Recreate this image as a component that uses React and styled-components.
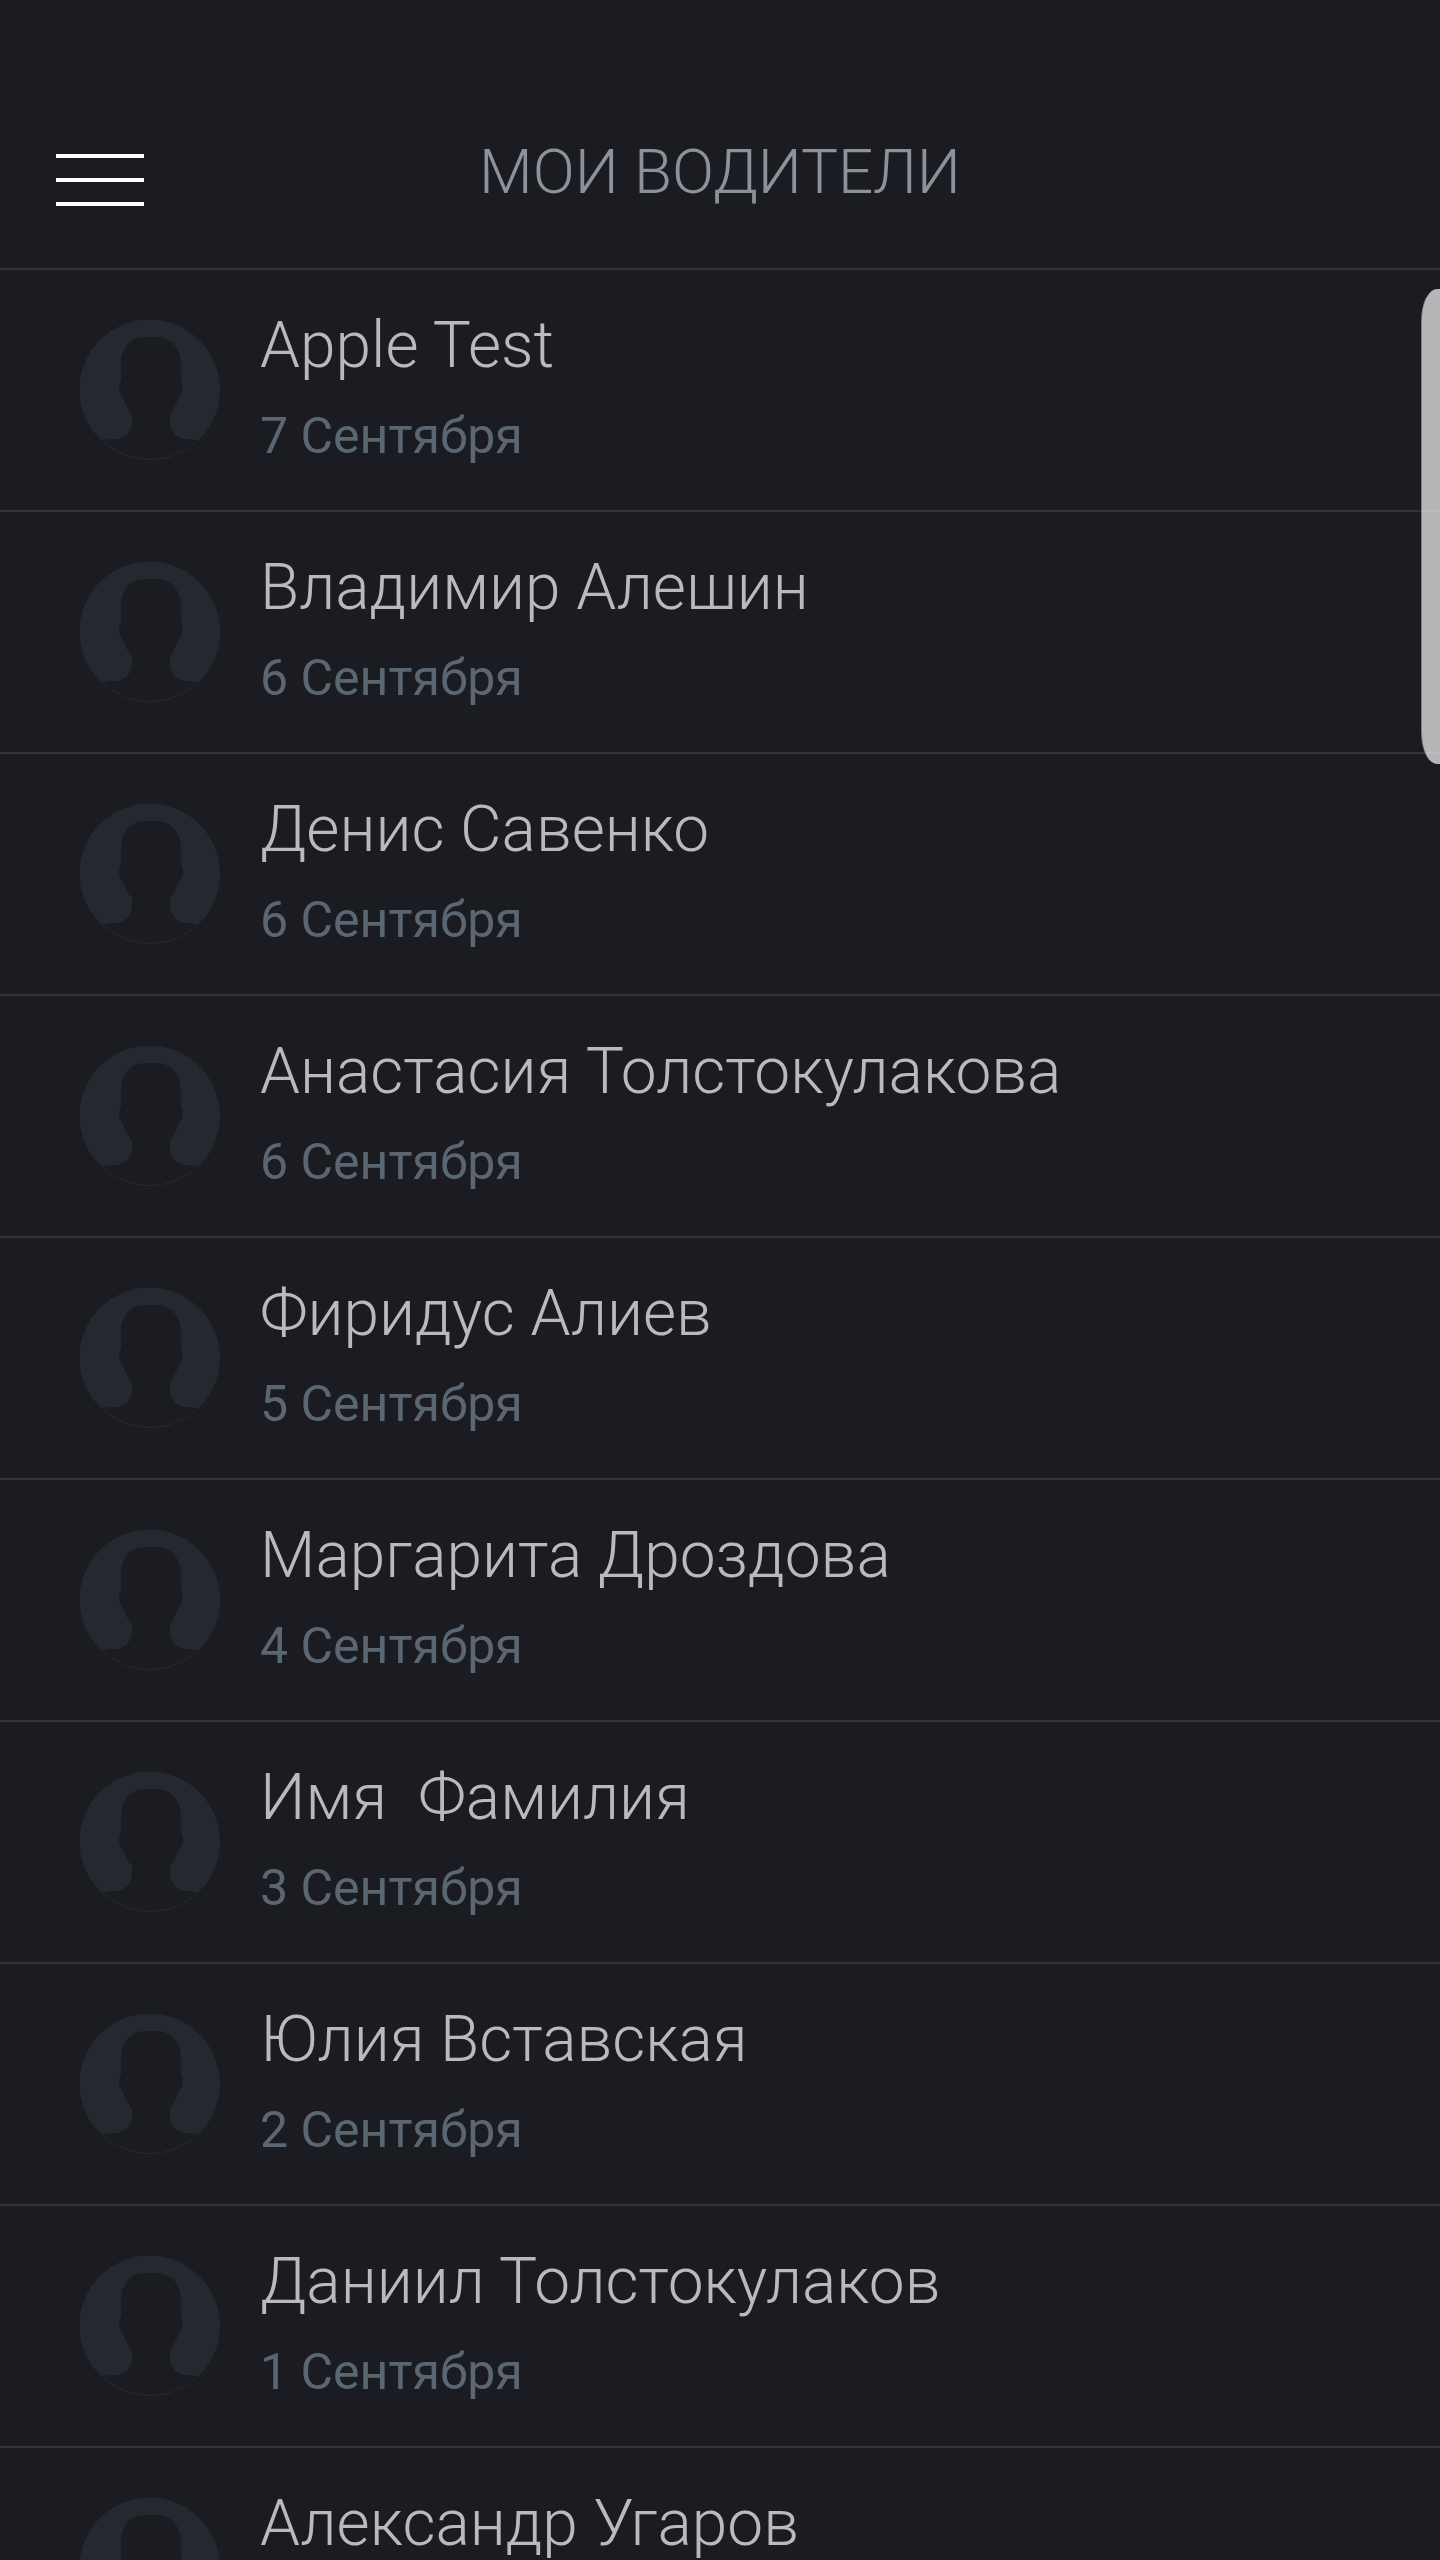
import React from "react";
import styled, { createGlobalStyle } from "styled-components";

const drivers = [
  { name: "Apple Test", date: "7 Сентября" },
  { name: "Владимир Алешин", date: "6 Сентября" },
  { name: "Денис Савенко", date: "6 Сентября" },
  { name: "Анастасия Толстокулакова", date: "6 Сентября" },
  { name: "Фиридус Алиев", date: "5 Сентября" },
  { name: "Маргарита Дроздова", date: "4 Сентября" },
  { name: "Имя  Фамилия", date: "3 Сентября" },
  { name: "Юлия Вставская", date: "2 Сентября" },
  { name: "Даниил Толстокулаков", date: "1 Сентября" },
  { name: "Александр Угаров" },
];

const Avatar = () => (
  <AvatarIcon viewBox="0 0 140 140" aria-hidden="true">
    <circle cx="70" cy="70" r="69.5" fill="none" stroke="#27292c" />
    <path
      fill="#25292f"
      d="M21 120A70 70 0 1 1 118 120L107 119C97 119 90 111 90 102V94C94 89 97 83 98 78C104 73 104 65 101 60V44C101 27 90 17 76 17H65C51 17 41 28 41 44V60C38 65 38 73 43 78C45 84 48 90 52 94V102C52 111 45 119 35 119Z"
    />
  </AvatarIcon>
);

const App = () => {
  return (
    <Page>
      <GlobalStyle />
      <Header>
        <MenuButton type="button" aria-label="Меню">
          <span />
          <span />
          <span />
        </MenuButton>
        <Title>МОИ ВОДИТЕЛИ</Title>
      </Header>
      <List>
        {drivers.map((driver) => (
          <Row key={driver.name}>
            <Avatar />
            <Info>
              <Name>{driver.name}</Name>
              {driver.date && <DateText>{driver.date}</DateText>}
            </Info>
          </Row>
        ))}
      </List>
      <EdgeHandle />
    </Page>
  );
};

export default App;

const GlobalStyle = createGlobalStyle`
  * {
    box-sizing: border-box;
  }

  body {
    margin: 0;
    background: #1b1c21;
    font-family: Roboto, "Noto Sans", sans-serif;
  }
`;

const Page = styled.div`
  position: relative;
  display: flex;
  flex-direction: column;
  height: 100vh;
  overflow: hidden;
`;

const Header = styled.header`
  display: grid;
  grid-template-columns: 1fr auto 1fr;
  align-items: center;
  flex-shrink: 0;
  padding: 132px 56px 56px;
  border-bottom: 2px solid #323337;
`;

const MenuButton = styled.button`
  display: flex;
  flex-direction: column;
  justify-self: start;
  gap: 20px;
  width: 88px;
  padding: 20px 0 4px;
  border: none;
  background: none;
  cursor: pointer;

  span {
    height: 4px;
    background: #fff;
  }
`;

const Title = styled.h1`
  margin: 0;
  font-size: 62px;
  font-weight: 300;
  line-height: 80px;
  color: #8e9199;
`;

const List = styled.ul`
  flex: 1;
  min-height: 0;
  margin: 0;
  padding: 0;
  list-style: none;
  overflow-y: auto;
  scrollbar-width: none;
`;

const Row = styled.li`
  display: flex;
  gap: 40px;
  padding: 50px 80px;
  border-bottom: 2px solid #323337;
`;

const AvatarIcon = styled.svg`
  flex-shrink: 0;
  width: 140px;
  height: 140px;
`;

const Info = styled.div`
  display: flex;
  flex-direction: column;
  gap: 28px;
  height: 140px;
`;

const Name = styled.span`
  font-size: 64px;
  font-weight: 300;
  line-height: 52px;
  white-space: pre;
  color: #bababa;
`;

const DateText = styled.span`
  font-size: 50px;
  line-height: 72px;
  color: #5b6673;
`;

// translucent handle over the right edge of the screen
const EdgeHandle = styled.div`
  position: absolute;
  top: 289px;
  right: 0;
  width: 19px;
  height: 475px;
  border-left: 1px solid rgba(90, 90, 92, 0.6);
  border-radius: 16px 0 0 16px / 32px 0 0 32px;
  background: rgba(255, 255, 255, 0.68);
`;
